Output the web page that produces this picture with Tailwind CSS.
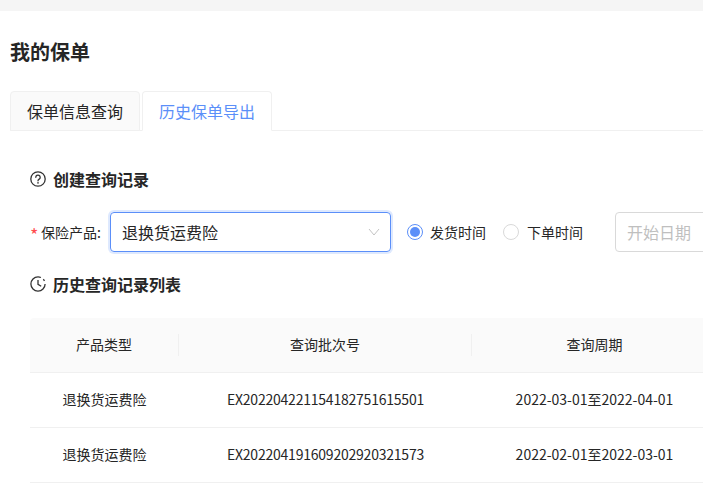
<!DOCTYPE html>
<html lang="zh-CN">
<head>
  <meta charset="UTF-8" />
  <title>我的保单</title>
  <script src="https://cdn.jsdelivr.net/npm/@tailwindcss/browser@4"></script>
</head>
<body class="h-[486px] w-[703px] overflow-hidden bg-white font-['Noto_Sans_CJK_SC','Noto_Sans',sans-serif] text-[#262626]">
  <div class="h-[11px] bg-[#f5f5f5]"></div>

  <main class="w-[703px] overflow-hidden pl-[10px]">
    <h1 class="mt-[27px] h-[28px] text-[20px] leading-[28px] font-semibold">我的保单</h1>

    <!-- tabs -->
    <div class="mt-[25px] flex h-[40px] w-[693px] gap-[2px] border-b border-[#f0f0f0]">
      <div class="flex h-[40px] w-[130px] items-center justify-center rounded-t-[4px] border border-[#f0f0f0] bg-[#fafafa] text-[16px] leading-none">保单信息查询</div>
      <div class="flex h-[40px] w-[130px] items-center justify-center rounded-t-[4px] border border-[#f0f0f0] border-b-white bg-white text-[16px] leading-none text-[#5b8ff9]">历史保单导出</div>
    </div>

    <section class="pl-[20px]">
      <div class="mt-[37px] flex h-[22px] items-center gap-[7px] text-[16px] font-semibold">
        <svg class="size-[16px]" viewBox="0 0 16 16" fill="none" stroke="#333333">
          <circle cx="8" cy="8" r="7.2" stroke-width="1.3" />
          <path d="M5.8 6.3a2.2 2.2 0 1 1 3.4 1.8c-.8.5-1.2.8-1.2 1.7" stroke-width="1.3" stroke-linecap="round" />
          <circle cx="8" cy="11.9" r=".8" fill="#333333" stroke="none" />
        </svg>
        <span>创建查询记录</span>
      </div>

      <!-- form row -->
      <div class="mt-[22px] flex h-[40px] items-center whitespace-nowrap">
        <span class="w-[11px] flex-none pt-[4px] text-[18px] leading-none text-[#ff4d4f]">*</span>
        <label class="w-[69px] flex-none text-[14px]">保险产品:</label>
        <div class="flex h-[40px] w-[281px] flex-none items-center justify-between rounded-[4px] border border-[#5b8ff9] pr-[10px] pl-[11px] text-[16px] shadow-[0_0_0_2px_rgba(91,143,249,0.2)]">
          <span>退换货运费险</span>
          <svg class="h-[8px] w-[12px]" viewBox="0 0 12 8" fill="none" stroke="#c4c4c4" stroke-width="1">
            <path d="M1 1l5 6 5-6" />
          </svg>
        </div>
        <div class="ml-[16px] flex size-[16px] flex-none items-center justify-center rounded-full border border-[#5b8ff9]">
          <span class="size-[10px] rounded-full bg-[#5b8ff9]"></span>
        </div>
        <span class="ml-[7px] w-[73px] flex-none text-[14px]">发货时间</span>
        <span class="size-[16px] flex-none rounded-full border border-[#d9d9d9]"></span>
        <span class="ml-[8px] w-[88px] flex-none text-[14px]">下单时间</span>
        <div class="flex h-[40px] w-[200px] flex-none items-center rounded-[4px] border border-[#d9d9d9] pl-[11px] text-[16px] text-[#bfbfbf]">开始日期</div>
      </div>

      <div class="mt-[21px] flex h-[22px] items-center gap-[7px] text-[16px] font-semibold">
        <svg class="size-[16px]" viewBox="0 0 16 16" fill="none" stroke="#333333" stroke-width="1.3">
          <path d="M8 .9A7.1 7.1 0 1 0 15.1 8" />
          <path d="M8 .9c1 0 2 .2 2.9.6M13.3 3.3c.5.5.9 1 1.2 1.6" />
          <path d="M8 4v4.4l3.2 1.8" />
        </svg>
        <span>历史查询记录列表</span>
      </div>

      <!-- table -->
      <div class="mt-[23px] w-[690px] text-[14px] whitespace-nowrap">
        <div class="grid h-[55px] grid-cols-[149px_293px_245px] items-center rounded-t-[4px] border-b border-[#f0f0f0] bg-[#fafafa] pb-[1px]">
          <div class="flex h-[22px] items-center justify-center border-r border-[#f0f0f0]">产品类型</div>
          <div class="flex h-[22px] items-center justify-center border-r border-[#f0f0f0]">查询批次号</div>
          <div class="text-center">查询周期</div>
        </div>
        <div class="grid h-[55px] grid-cols-[149px_293px_245px] items-center border-b border-[#f0f0f0] pb-[1px]">
          <div class="text-center">退换货运费险</div>
          <div class="text-center tracking-[-0.22px]">EX202204221154182751615501</div>
          <div class="text-center">2022-03-01至2022-04-01</div>
        </div>
        <div class="grid h-[55px] grid-cols-[149px_293px_245px] items-center border-b border-[#f0f0f0] pb-[1px]">
          <div class="text-center">退换货运费险</div>
          <div class="text-center tracking-[-0.22px]">EX202204191609202920321573</div>
          <div class="text-center">2022-02-01至2022-03-01</div>
        </div>
      </div>
    </section>
  </main>
</body>
</html>
